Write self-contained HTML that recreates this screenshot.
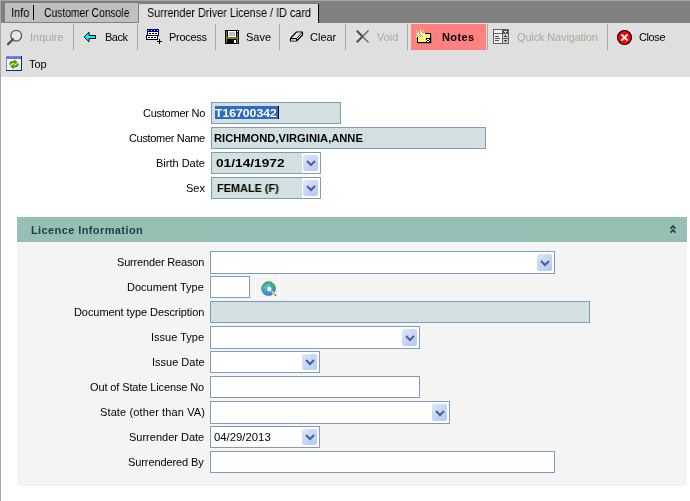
<!DOCTYPE html>
<html><head><meta charset="utf-8">
<style>
*{box-sizing:border-box}
html,body{margin:0;padding:0}
body{width:690px;height:501px;position:relative;overflow:hidden;background:#fff;font-family:"Liberation Sans",sans-serif;font-size:11px;color:#000}
.a{position:absolute}
.t{position:absolute;will-change:transform;white-space:nowrap;line-height:13px;font-size:11px}
.sep{position:absolute;top:24px;width:1px;height:26px;background:#aca899}
.dis{color:#aca899}
.lbl{position:absolute;will-change:transform;white-space:nowrap;line-height:13px;font-size:11px;text-align:right;right:486px}
.inp{position:absolute;border:1px solid #7f9db9;background:#fff;height:22px}
.ro{background:#d2e0e0}
.dd{position:absolute;top:0;right:0;width:18px;height:20px;background:#fff}
.dd i{position:absolute;left:1px;top:2px;width:15px;height:16px;border-radius:2px;background:linear-gradient(135deg,#dde7fd 0%,#c6d5fa 50%,#b4c8f7 100%)}
.dd svg{position:absolute;left:3.5px;top:7px}
.tall{height:23px}
.tall .dd{height:21px}
.tall .dd i{height:17px}
.tall .dd svg{top:8px}
.vt{position:absolute;will-change:transform;white-space:nowrap;line-height:13px;font-size:11px;font-weight:bold}
</style></head><body>
<!-- left khaki border -->
<div class="a" style="left:0;top:0;width:1px;height:501px;background:#aca899"></div>
<div class="a" style="left:0;top:0;width:690px;height:1px;background:#aca899"></div>
<!-- tab strip -->
<div class="a" style="left:1px;top:1px;width:689px;height:22px;background:#808080"></div>
<div class="a" style="left:5px;top:3px;width:133px;height:19px;background:#c0c0c0"></div>
<div class="a" style="left:33px;top:5px;width:1px;height:15px;background:#000"></div>
<div class="t" style="left:11px;top:7px;font-size:12px;transform:scaleX(0.92);transform-origin:0 0">Info</div>
<div class="t" style="left:44px;top:7px;font-size:12px;transform:scaleX(0.86);transform-origin:0 0">Customer Console</div>
<div class="a" style="left:139px;top:4px;width:180px;height:19px;background:#dfdfdf;border-right:1px solid #000"></div>
<div class="t" style="left:147px;top:7px;font-size:12px;transform:scaleX(0.9);transform-origin:0 0">Surrender Driver License / ID card</div>
<!-- toolbar -->
<div class="a" style="left:1px;top:23px;width:689px;height:54px;background:#dfdfdf"></div>
<div class="a" style="left:139px;top:22px;width:179px;height:1px;background:#dfdfdf"></div>

<div class="sep" style="left:73px"></div>
<div class="sep" style="left:137px"></div>
<div class="sep" style="left:215px"></div>
<div class="sep" style="left:279px"></div>
<div class="sep" style="left:345px"></div>
<div class="sep" style="left:407px"></div>
<div class="sep" style="left:487px"></div>
<div class="sep" style="left:607px"></div>

<div class="a" style="left:411px;top:24px;width:75px;height:26px;background:#ff8080"></div>

<div class="t dis" style="left:30px;top:31px">Inquire</div>
<div class="t" style="left:105px;top:31px;letter-spacing:-0.5px">Back</div>
<div class="t" style="left:169px;top:31px;letter-spacing:-0.3px">Process</div>
<div class="t" style="left:246px;top:31px">Save</div>
<div class="t" style="left:310px;top:31px">Clear</div>
<div class="t dis" style="left:377px;top:31px">Void</div>
<div class="t" style="left:442px;top:31px;font-weight:bold;letter-spacing:0.4px">Notes</div>
<div class="t dis" style="left:517px;top:31px;letter-spacing:-0.15px">Quick Navigation</div>
<div class="t" style="left:639px;top:31px;letter-spacing:-0.4px">Close</div>
<div class="t" style="left:29px;top:58px">Top</div>

<!-- customer section -->
<div class="lbl" style="top:107px;right:485px;letter-spacing:-0.25px">Customer No</div>
<div class="lbl" style="top:132px;right:485px;letter-spacing:-0.33px">Customer Name</div>
<div class="lbl" style="top:157px;right:485px">Birth Date</div>
<div class="lbl" style="top:182px;right:485px">Sex</div>

<div class="inp ro" style="left:211px;top:102px;width:130px"></div>
<div class="a" style="left:215px;top:106px;width:63px;height:13px;background:#316ac5"></div>
<div class="a" style="left:278px;top:106px;width:1px;height:13px;background:#000"></div>
<div class="vt" style="left:215px;top:107px;color:#fff;transform:scaleX(1.11);transform-origin:0 0">T16700342</div>
<div class="inp ro" style="left:211px;top:127px;width:275px"></div>
<div class="vt" style="left:214px;top:132px;transform:scaleX(1.015);transform-origin:0 0">RICHMOND,VIRGINIA,ANNE</div>
<div class="inp ro" style="left:211px;top:152px;width:110px"><div class="dd"><i></i><svg width="10" height="7"><path d="M1 1 L5 5 L9 1" stroke="#4d6185" stroke-width="2" fill="none"/></svg></div></div>
<div class="vt" style="left:216px;top:157px;transform:scaleX(1.245);transform-origin:0 0">01/14/1972</div>
<div class="inp ro" style="left:211px;top:177px;width:110px"><div class="dd"><i></i><svg width="10" height="7"><path d="M1 1 L5 5 L9 1" stroke="#4d6185" stroke-width="2" fill="none"/></svg></div></div>
<div class="vt" style="left:217px;top:182px;transform:scaleX(0.99);transform-origin:0 0">FEMALE (F)</div>

<!-- licence section -->
<div class="a" style="left:17px;top:217px;width:670px;height:25px;background:#96c0b4"></div>
<div class="t" style="left:31px;top:224px;font-weight:bold;letter-spacing:0.4px;color:#1f4040">Licence Information</div>
<div class="a" style="left:17px;top:242px;width:670px;height:244px;background:#f4f4f4"></div>

<div class="lbl" style="top:256px;letter-spacing:-0.17px">Surrender Reason</div>
<div class="lbl" style="top:281px">Document Type</div>
<div class="lbl" style="top:306px;letter-spacing:-0.07px">Document type Description</div>
<div class="lbl" style="top:331px">Issue Type</div>
<div class="lbl" style="top:356px;right:485px">Issue Date</div>
<div class="lbl" style="top:381px;letter-spacing:-0.12px">Out of State License No</div>
<div class="lbl" style="top:406px;right:485px;letter-spacing:0.12px">State (other than VA)</div>
<div class="lbl" style="top:431px">Surrender Date</div>
<div class="lbl" style="top:456px;letter-spacing:-0.1px">Surrendered By</div>

<div class="inp tall" style="left:210px;top:251px;width:345px"><div class="dd"><i></i><svg width="10" height="7"><path d="M1 1 L5 5 L9 1" stroke="#4d6185" stroke-width="2" fill="none"/></svg></div></div>
<div class="inp" style="left:210px;top:276px;width:40px"></div>
<div class="a" style="left:255px;top:276px;width:25px;height:23px;border:1px solid #fbfbfb"></div>
<div class="inp ro" style="left:210px;top:301px;width:380px"></div>
<div class="inp tall" style="left:210px;top:326px;width:210px"><div class="dd"><i></i><svg width="10" height="7"><path d="M1 1 L5 5 L9 1" stroke="#4d6185" stroke-width="2" fill="none"/></svg></div></div>
<div class="inp" style="left:210px;top:351px;width:110px"><div class="dd"><i></i><svg width="10" height="7"><path d="M1 1 L5 5 L9 1" stroke="#4d6185" stroke-width="2" fill="none"/></svg></div></div>
<div class="inp" style="left:210px;top:376px;width:210px"></div>
<div class="inp tall" style="left:210px;top:401px;width:240px"><div class="dd"><i></i><svg width="10" height="7"><path d="M1 1 L5 5 L9 1" stroke="#4d6185" stroke-width="2" fill="none"/></svg></div></div>
<div class="inp" style="left:210px;top:426px;width:110px"><div class="dd"><i></i><svg width="10" height="7"><path d="M1 1 L5 5 L9 1" stroke="#4d6185" stroke-width="2" fill="none"/></svg></div></div>
<div class="t" style="left:214px;top:431px;transform:scaleX(1.03);transform-origin:0 0">04/29/2013</div>
<div class="inp" style="left:210px;top:451px;width:345px"></div>
<!-- icons -->
<svg class="a" style="left:0;top:0" width="690" height="80" viewBox="0 0 690 80">
 <!-- magnifier -->
 <circle cx="16.2" cy="35.7" r="5.4" fill="#e6e6e6" stroke="#5c5c5c" stroke-width="1.3"/><path d="M18 32.5 A3.5 3.5 0 0 1 19.5 34.5" stroke="#fff" stroke-width="0.8" fill="none"/>
 <path d="M13 39.2 L8 44.2" stroke="#505050" stroke-width="2.3" stroke-linecap="round"/>
 <!-- back arrow -->
 <path d="M84.2 37 L89 32.3 L89 35.5 L95.5 35.5 L95.5 38.5 L89 38.5 L89 41.7 Z" fill="#00ffff" stroke="#000" stroke-width="1" stroke-linejoin="miter"/>
 <!-- process -->
 <g shape-rendering="crispEdges">
  <rect x="147" y="29" width="12" height="7" fill="#000080"/>
  <rect x="148" y="30" width="1" height="1" fill="#c0c0e0"/><rect x="151" y="30" width="1" height="1" fill="#c0c0e0"/><rect x="154" y="30" width="1" height="1" fill="#c0c0e0"/><rect x="157" y="30" width="1" height="1" fill="#c0c0e0"/>
  <rect x="148" y="32" width="10" height="3" fill="#fff"/>
  <rect x="149" y="33" width="2" height="1" fill="#000"/><rect x="152" y="33" width="2" height="1" fill="#000"/><rect x="155" y="33" width="2" height="1" fill="#000"/>
  <rect x="146" y="35" width="12" height="5" fill="#000"/>
  <rect x="147" y="36" width="10" height="3" fill="#fff"/>
  <rect x="148" y="37" width="2" height="1" fill="#000"/><rect x="151" y="37" width="2" height="1" fill="#000"/><rect x="154" y="37" width="2" height="1" fill="#000"/>
  <rect x="157" y="41" width="5" height="1" fill="#000"/>
  <rect x="159" y="39" width="1" height="5" fill="#000"/>
 </g>
 <!-- save -->
 <g shape-rendering="crispEdges">
  <rect x="225" y="30" width="14" height="14" fill="#000"/>
  <rect x="226" y="31" width="1" height="12" fill="#808000"/>
  <rect x="237" y="33" width="1" height="10" fill="#808000"/>
  <rect x="226" y="37" width="12" height="2" fill="#808000"/>
  <rect x="228" y="31" width="8" height="6" fill="#fff"/>
  <rect x="229" y="32" width="6" height="4" fill="#c0c0c0"/>
  <rect x="237" y="31" width="1" height="1" fill="#fff"/>
  <rect x="234" y="40" width="2" height="3" fill="#fff"/>
 </g>
 <!-- eraser -->
 <path d="M290.5 38.5 L296.5 32 L302.5 32 L302.5 35 L296.5 41 L290.5 41 Z" fill="#fff" stroke="#000" stroke-width="1.2" stroke-linejoin="round"/>
 <path d="M291 39 L296 39 L296 40.5 L291 40.5 Z" fill="#c8c8c8"/>
 <path d="M292.5 37.5 L297.5 32.7 L301.3 32.7 L296.3 37.5 Z" fill="#c8c8c8" opacity="0.6"/>
 <path d="M290.5 38.5 L296.5 38.5 L302.5 32 M296.5 38.5 L296.5 41" stroke="#000" stroke-width="1" fill="none"/>
 <!-- X void -->
 <path d="M357 31 L368.5 42.5" stroke="#555" stroke-width="1.1"/>
 <path d="M356.8 30.8 L362.5 36.5" stroke="#555" stroke-width="2.1"/>
 <path d="M368.5 30.5 L357 42" stroke="#555" stroke-width="1.1"/>
 <path d="M362.5 36.5 L356.8 42.2" stroke="#555" stroke-width="2.1"/>
 <!-- notes -->
 <g shape-rendering="crispEdges"><rect x="431" y="34" width="1" height="10" fill="#b07070"/><rect x="418" y="43" width="14" height="1" fill="#b07070"/><rect x="425" y="33" width="6" height="1" fill="#000"/><rect x="430" y="33" width="1" height="10" fill="#000"/><rect x="417" y="42" width="14" height="1" fill="#000"/><rect x="417" y="37" width="1" height="6" fill="#000"/><rect x="418" y="34" width="1" height="1" fill="#ffff00"/><rect x="419" y="34" width="1" height="1" fill="#ffffff"/><rect x="420" y="34" width="1" height="1" fill="#ffff00"/><rect x="421" y="34" width="1" height="1" fill="#ffffff"/><rect x="422" y="34" width="1" height="1" fill="#ffff00"/><rect x="423" y="34" width="1" height="1" fill="#ffffff"/><rect x="424" y="34" width="1" height="1" fill="#ffff00"/><rect x="425" y="34" width="1" height="1" fill="#ffffff"/><rect x="426" y="34" width="1" height="1" fill="#ffff00"/><rect x="427" y="34" width="1" height="1" fill="#ffffff"/><rect x="428" y="34" width="1" height="1" fill="#ffff00"/><rect x="429" y="34" width="1" height="1" fill="#ffffff"/><rect x="418" y="35" width="1" height="1" fill="#ffffff"/><rect x="419" y="35" width="1" height="1" fill="#ffff00"/><rect x="420" y="35" width="1" height="1" fill="#ffffff"/><rect x="421" y="35" width="1" height="1" fill="#ffff00"/><rect x="422" y="35" width="1" height="1" fill="#ffffff"/><rect x="423" y="35" width="1" height="1" fill="#ffff00"/><rect x="424" y="35" width="1" height="1" fill="#ffffff"/><rect x="425" y="35" width="1" height="1" fill="#ffff00"/><rect x="426" y="35" width="1" height="1" fill="#ffffff"/><rect x="427" y="35" width="1" height="1" fill="#ffff00"/><rect x="428" y="35" width="1" height="1" fill="#ffffff"/><rect x="429" y="35" width="1" height="1" fill="#ffff00"/><rect x="418" y="36" width="1" height="1" fill="#ffff00"/><rect x="419" y="36" width="1" height="1" fill="#ffffff"/><rect x="420" y="36" width="1" height="1" fill="#ffff00"/><rect x="421" y="36" width="1" height="1" fill="#ffffff"/><rect x="422" y="36" width="1" height="1" fill="#ffff00"/><rect x="423" y="36" width="1" height="1" fill="#ffffff"/><rect x="424" y="36" width="1" height="1" fill="#ffff00"/><rect x="425" y="36" width="1" height="1" fill="#ffffff"/><rect x="426" y="36" width="1" height="1" fill="#ffff00"/><rect x="427" y="36" width="1" height="1" fill="#ffffff"/><rect x="428" y="36" width="1" height="1" fill="#ffff00"/><rect x="429" y="36" width="1" height="1" fill="#ffffff"/><rect x="418" y="37" width="1" height="1" fill="#ffffff"/><rect x="419" y="37" width="1" height="1" fill="#ffff00"/><rect x="420" y="37" width="1" height="1" fill="#ffffff"/><rect x="421" y="37" width="1" height="1" fill="#ffff00"/><rect x="422" y="37" width="1" height="1" fill="#ffffff"/><rect x="423" y="37" width="1" height="1" fill="#ffff00"/><rect x="424" y="37" width="1" height="1" fill="#ffffff"/><rect x="425" y="37" width="1" height="1" fill="#ffff00"/><rect x="426" y="37" width="1" height="1" fill="#ffffff"/><rect x="427" y="37" width="1" height="1" fill="#ffff00"/><rect x="428" y="37" width="1" height="1" fill="#ffffff"/><rect x="429" y="37" width="1" height="1" fill="#ffff00"/><rect x="418" y="38" width="1" height="1" fill="#ffff00"/><rect x="419" y="38" width="1" height="1" fill="#ffffff"/><rect x="420" y="38" width="1" height="1" fill="#ffff00"/><rect x="421" y="38" width="1" height="1" fill="#ffffff"/><rect x="422" y="38" width="1" height="1" fill="#ffff00"/><rect x="423" y="38" width="1" height="1" fill="#ffffff"/><rect x="424" y="38" width="1" height="1" fill="#ffff00"/><rect x="425" y="38" width="1" height="1" fill="#ffffff"/><rect x="418" y="39" width="1" height="1" fill="#ffffff"/><rect x="419" y="39" width="1" height="1" fill="#ffff00"/><rect x="420" y="39" width="1" height="1" fill="#ffffff"/><rect x="421" y="39" width="1" height="1" fill="#ffff00"/><rect x="422" y="39" width="1" height="1" fill="#ffffff"/><rect x="423" y="39" width="1" height="1" fill="#ffff00"/><rect x="424" y="39" width="1" height="1" fill="#ffffff"/><rect x="425" y="39" width="1" height="1" fill="#ffff00"/><rect x="418" y="40" width="1" height="1" fill="#ffff00"/><rect x="419" y="40" width="1" height="1" fill="#ffffff"/><rect x="420" y="40" width="1" height="1" fill="#ffff00"/><rect x="421" y="40" width="1" height="1" fill="#ffffff"/><rect x="422" y="40" width="1" height="1" fill="#ffff00"/><rect x="423" y="40" width="1" height="1" fill="#ffffff"/><rect x="424" y="40" width="1" height="1" fill="#ffff00"/><rect x="425" y="40" width="1" height="1" fill="#ffffff"/><rect x="418" y="41" width="1" height="1" fill="#ffffff"/><rect x="419" y="41" width="1" height="1" fill="#ffff00"/><rect x="420" y="41" width="1" height="1" fill="#ffffff"/><rect x="421" y="41" width="1" height="1" fill="#ffff00"/><rect x="422" y="41" width="1" height="1" fill="#ffffff"/><rect x="423" y="41" width="1" height="1" fill="#ffff00"/><rect x="424" y="41" width="1" height="1" fill="#ffffff"/><rect x="425" y="41" width="1" height="1" fill="#ffff00"/><rect x="418" y="33" width="1" height="1" fill="#ffffff"/><rect x="419" y="33" width="1" height="1" fill="#ffff00"/><rect x="420" y="33" width="1" height="1" fill="#ffffff"/><rect x="421" y="33" width="1" height="1" fill="#ffff00"/><rect x="422" y="33" width="1" height="1" fill="#ffffff"/><rect x="423" y="33" width="1" height="1" fill="#ffff00"/><rect x="424" y="33" width="1" height="1" fill="#ffffff"/><rect x="426" y="38" width="4" height="4" fill="#000"/><rect x="427" y="39" width="2" height="1" fill="#fff"/><rect x="427" y="41" width="1" height="1" fill="#fff"/><rect x="426" y="40" width="1" height="1" fill="#fff"/><rect x="429" y="40" width="1" height="1" fill="#fff"/><rect x="428" y="41" width="1" height="1" fill="#fff"/><rect x="420" y="29" width="1" height="1" fill="#ffffff"/><rect x="420" y="30" width="1" height="1" fill="#d0d0f0"/><rect x="420" y="31" width="1" height="1" fill="#ffffff"/><rect x="420" y="32" width="1" height="1" fill="#ffff00"/><rect x="416" y="30" width="1" height="1" fill="#ffff00"/><rect x="417" y="31" width="1" height="1" fill="#ffff00"/><rect x="418" y="32" width="1" height="1" fill="#ffffff"/><rect x="423" y="30" width="1" height="1" fill="#ffff00"/><rect x="422" y="31" width="1" height="1" fill="#ffff00"/><rect x="421" y="32" width="1" height="1" fill="#ffffff"/><rect x="416" y="33" width="1" height="1" fill="#ffffff"/><rect x="417" y="33" width="1" height="1" fill="#ffff00"/><rect x="418" y="33" width="1" height="1" fill="#d0d0f0"/><rect x="416" y="36" width="1" height="1" fill="#ffffff"/><rect x="417" y="35" width="1" height="1" fill="#ffff00"/><rect x="418" y="34" width="1" height="1" fill="#ffffff"/><rect x="419" y="33" width="1" height="1" fill="#9090c0"/><rect x="420" y="34" width="1" height="1" fill="#9090c0"/><rect x="421" y="35" width="1" height="1" fill="#9090c0"/><rect x="419" y="35" width="1" height="1" fill="#9090c0"/><rect x="420" y="36" width="1" height="1" fill="#9090c0"/><rect x="422" y="36" width="1" height="1" fill="#9090c0"/><rect x="417" y="34" width="1" height="1" fill="#ffffff"/><rect x="416" y="37" width="1" height="1" fill="#ffff00"/></g>
 <!-- quick nav -->
 <g shape-rendering="crispEdges">
  <rect x="493" y="29" width="16" height="15" fill="#606060"/>
  <rect x="494" y="30" width="8" height="3" fill="#f0f0f0"/>
  <rect x="494" y="34" width="8" height="9" fill="#f0f0f0"/>
  <rect x="502" y="30" width="6" height="3" fill="#505050"/>
  <rect x="503" y="34" width="5" height="4" fill="#d0d0d0"/>
  <rect x="503" y="39" width="5" height="4" fill="#d0d0d0"/>
  <rect x="495" y="36" width="4" height="1" fill="#505050"/>
  <rect x="495" y="38" width="5" height="1" fill="#505050"/>
  <rect x="495" y="40" width="4" height="1" fill="#505050"/>
  <rect x="504" y="31" width="3" height="1" fill="#e0e0e0"/><rect x="505" y="32" width="1" height="1" fill="#e0e0e0"/>
  <rect x="505" y="35" width="1" height="1" fill="#404040"/><rect x="504" y="36" width="3" height="1" fill="#404040"/>
  <rect x="504" y="40" width="3" height="1" fill="#404040"/><rect x="505" y="41" width="1" height="1" fill="#404040"/>
 </g>
 <!-- close -->
 <circle cx="624.5" cy="37.5" r="7" fill="#ff0000" stroke="#000" stroke-width="1.1"/>
 <path d="M621.5 34.5 L627.5 40.5 M627.5 34.5 L621.5 40.5" stroke="#fff" stroke-width="1.8"/>
 <!-- top -->
 <g shape-rendering="crispEdges">
  <rect x="6" y="56" width="16" height="15" fill="#20206a"/>
  <rect x="6" y="56" width="15" height="14" fill="#8080e0"/>
  <rect x="7" y="57" width="14" height="2" fill="#5878e8"/>
  <rect x="7" y="59" width="14" height="11" fill="#fafafa"/>
  <rect x="16" y="64" width="5" height="6" fill="#d8ecf8"/>
 </g>
 <path d="M10.2 64.8 Q10.2 61.8 13.5 61.8 L14.5 61.8" stroke="#5a9e0a" stroke-width="2.2" fill="none"/>
 <path d="M14 59.2 L17.8 62 L14 64.8 Z" fill="#5a9e0a"/>
 <path d="M17.8 63.2 Q17.8 66.4 14.5 66.4 L13.5 66.4" stroke="#5a9e0a" stroke-width="2.2" fill="none"/>
 <path d="M14 63.6 L10 66.4 L14 69.2 Z" fill="#5a9e0a"/>
</svg>
<svg class="a" style="left:0;top:210px" width="690" height="100" viewBox="0 210 690 100">
 <!-- chevrons -->
 <path d="M670.6 228.6 L673 226 L675.4 228.6 M670.6 232.6 L673 230 L675.4 232.6" stroke="#1f4040" stroke-width="1.6" fill="none" stroke-linejoin="miter"/>
 <!-- globe -->
 <defs><radialGradient id="gl" cx="0.45" cy="0.4" r="0.65"><stop offset="0" stop-color="#b8e4ff"/><stop offset="0.5" stop-color="#48a8f8"/><stop offset="1" stop-color="#1070d8"/></radialGradient></defs>
 <circle cx="268.5" cy="288.6" r="7" fill="url(#gl)" stroke="#606878" stroke-width="0.6"/>
 <path d="M263.2 285 Q265 282.2 268 281.8 L269 284 Q266 284.5 265 287 Z" fill="#3cbc2c"/>
 <path d="M270 282.2 Q273.5 283 275 286.5 L273 287.5 Q271.5 285 269.5 284.5 Z" fill="#3cbc2c"/>
 <path d="M263.5 288.5 L265.5 289.5 L265 292 L263.2 290.5 Z" fill="#3cbc2c"/>
 <path d="M267 293.5 L269.5 293.8 L268 294.8 Z" fill="#3cbc2c"/>
 <ellipse cx="269.3" cy="289" rx="3" ry="3.4" fill="none" stroke="#2b8ef0" stroke-width="1"/>
 <ellipse cx="269.3" cy="289" rx="2.2" ry="2.6" fill="#f4fbff"/>
 <path d="M271.6 291.4 L274.6 294.2" stroke="#f4c830" stroke-width="2.2"/>
 <path d="M274.8 294.6 L276.2 295.6" stroke="#3a78c8" stroke-width="1.6"/>
</svg>

</body></html>
